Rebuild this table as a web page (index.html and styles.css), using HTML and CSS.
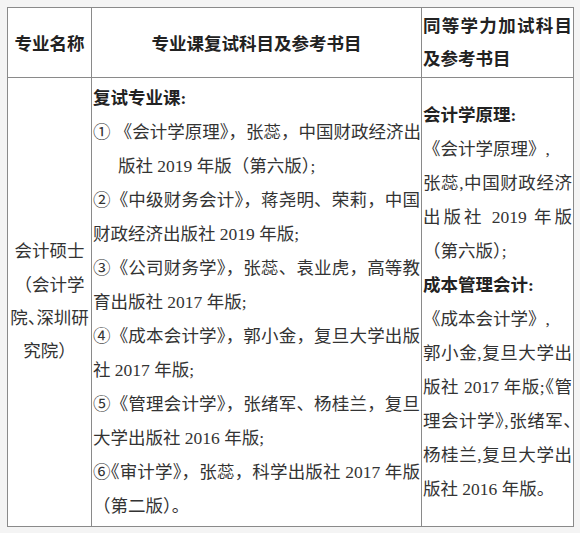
FILE: index.html
```html
<!DOCTYPE html>
<html lang="zh-CN">
<head>
<meta charset="utf-8">
<title>会计硕士</title>
<link rel="stylesheet" href="styles.css">
</head>
<body>
<table class="grid">
  <colgroup>
    <col class="c1">
    <col class="c2">
    <col class="c3">
  </colgroup>
  <tr class="head">
    <td class="center b">专业名称</td>
    <td class="center b">专业课复试科目及参考书目</td>
    <td class="b">
      <div class="ln j">同等学力加试科目</div>
      <div class="ln">及参考书目</div>
    </td>
  </tr>
  <tr class="body">
    <td class="center name">
      <div class="ln">会计硕士</div>
      <div class="ln">（会计学</div>
      <div class="ln">院<span class="h">、</span>深圳研</div>
      <div class="ln">究院）</div>
    </td>
    <td class="main">
      <div class="ln b">复试专业课:</div>
      <div class="ln j">① 《会计学原理》，张蕊，中国财政经济出</div>
      <div class="ln ind">版社 2019 年版（第六版<span class="h">）</span>;</div>
      <div class="ln j">②《中级财务会计》，蒋尧明、荣莉，中国</div>
      <div class="ln">财政经济出版社 2019 年版;</div>
      <div class="ln j">③《公司财务学》，张蕊、袁业虎，高等教</div>
      <div class="ln">育出版社 2017 年版;</div>
      <div class="ln j">④《成本会计学》，郭小金，复旦大学出版</div>
      <div class="ln">社 2017 年版;</div>
      <div class="ln j">⑤《管理会计学》，张绪军、杨桂兰，复旦</div>
      <div class="ln">大学出版社 2016 年版;</div>
      <div class="ln j">⑥<span class="h">《</span>审计学<span class="h">》</span>，张蕊，科学出版社 2017 年版</div>
      <div class="ln">（第二版）。</div>
    </td>
    <td class="side">
      <div class="ln b">会计学原理:</div>
      <div class="ln">《会计学原理》,</div>
      <div class="ln j">张蕊,中国财政经济</div>
      <div class="ln j">出版社 2019 年版</div>
      <div class="ln">（第六版<span class="h">）</span>;</div>
      <div class="ln b">成本管理会计:</div>
      <div class="ln">《成本会计学》,</div>
      <div class="ln j">郭小金,复旦大学出</div>
      <div class="ln j">版社 2017 年版;<span class="h">《</span>管</div>
      <div class="ln j">理会计学<span class="h">》</span>,张绪军<span class="h">、</span></div>
      <div class="ln j">杨桂兰,复旦大学出</div>
      <div class="ln">版社 2016 年版。</div>
    </td>
  </tr>
</table>
</body>
</html>
```

FILE: styles.css
```css
html, body {
  margin: 0;
  padding: 0;
}
body {
  background: #f4f4f4;
  width: 580px;
  height: 533px;
  overflow: hidden;
  font-family: "Liberation Serif", "Noto Sans CJK SC", serif;
  font-size: 17.5px;
  color: #333;
}
.grid {
  margin: 7px 0 0 7px;
  border-collapse: collapse;
  table-layout: fixed;
  width: 566px;
  background: #fff;
}
.c1 { width: 84px; }
.c2 { width: 330px; }
.c3 { width: 152px; }
.grid td {
  border: 1px solid #8a8a8a;
  padding: 0 1px;
  vertical-align: middle;
}
.head { height: 70px; }
.body { height: 449px; }
.center { text-align: center; }
.b { font-weight: 700; color: #222; }
.ln {
  line-height: 34px;
  white-space: nowrap;
}
.head .ln { line-height: 33px; }
.name .ln { line-height: 33.3px; }
.j {
  text-align: justify;
  text-align-last: justify;
}
.ind { padding-left: 25px; }
.h { font-feature-settings: "halt"; }
```
